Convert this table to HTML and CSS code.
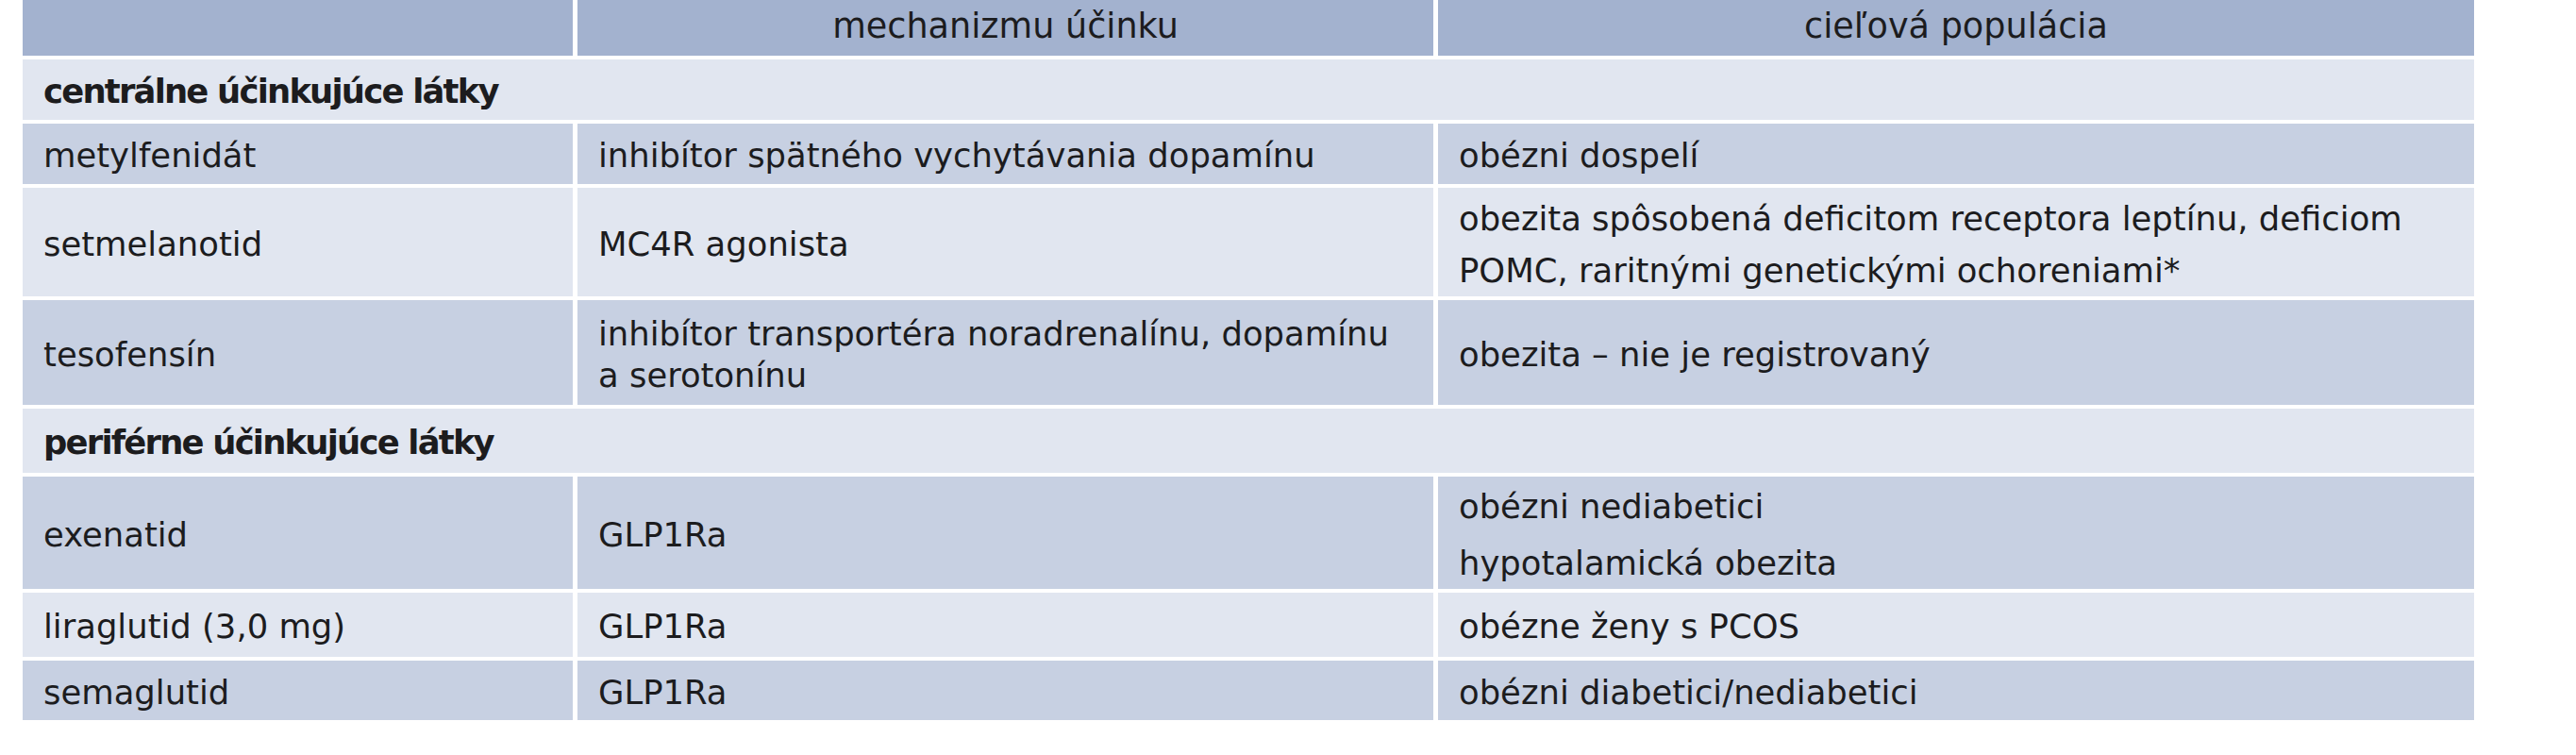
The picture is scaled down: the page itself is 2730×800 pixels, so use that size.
FILE: index.html
```html
<!DOCTYPE html>
<html lang="sk">
<head>
<meta charset="utf-8">
<title>Tabuľka – lieky</title>
<link rel="stylesheet" href="styles.css">
</head>
<body>
<div class="table" role="table">
  <div class="cell head"></div>
  <div class="cell head">mechanizmu účinku</div>
  <div class="cell head">cieľová populácia</div>

  <div class="cell cat light">centrálne účinkujúce látky</div>

  <div class="cell dark">metylfenidát</div>
  <div class="cell dark">inhibítor spätného vychytávania dopamínu</div>
  <div class="cell dark">obézni dospelí</div>

  <div class="cell light">setmelanotid</div>
  <div class="cell light">MC4R agonista</div>
  <div class="cell light"><span class="wide">obezita spôsobená deficitom receptora leptínu, deficiom POMC, raritnými genetickými ochoreniami*</span></div>

  <div class="cell dark">tesofensín</div>
  <div class="cell dark"><span class="tall">inhibítor transportéra noradrenalínu, dopamínu a&nbsp;serotonínu</span></div>
  <div class="cell dark">obezita – nie je registrovaný</div>

  <div class="cell cat light">periférne účinkujúce látky</div>

  <div class="cell dark">exenatid</div>
  <div class="cell dark">GLP1Ra</div>
  <div class="cell dark stack"><p>obézni nediabetici</p><p>hypotalamická obezita</p></div>

  <div class="cell light">liraglutid (3,0 mg)</div>
  <div class="cell light">GLP1Ra</div>
  <div class="cell light">obézne ženy s PCOS</div>

  <div class="cell dark">semaglutid</div>
  <div class="cell dark">GLP1Ra</div>
  <div class="cell dark">obézni diabetici/nediabetici</div>
</div>
</body>
</html>
```
FILE: styles.css
```css
html, body {
  margin: 0;
  padding: 0;
  background: #ffffff;
}

body {
  font-family: "DejaVu Sans", "Noto Sans", sans-serif;
  font-size: 35.4px;
  color: #1c1c1e;
}

.table {
  display: grid;
  grid-template-columns: 583px 907px 1098px;
  grid-template-rows: 59px 64px 64px 115px 111px 68px 119px 68px 63px;
  column-gap: 5px;
  row-gap: 4px;
  margin-left: 24px;
  width: 2598px;
}

.cell {
  display: flex;
  flex-direction: column;
  justify-content: center;
  padding: 4px 18px 0 22px;
  line-height: 36px;
  box-sizing: border-box;
}

.head {
  background: #a3b2cf;
  align-items: center;
  padding: 0 0 4px 0;
  font-size: 36.6px;
}

.light {
  background: #e1e6f0;
}

.dark {
  background: #c7d0e2;
}

.cat {
  grid-column: 1 / -1;
  font-weight: bold;
  letter-spacing: -1.8px;
}

.wide {
  line-height: 55px;
}

.tall {
  line-height: 44px;
}

.stack p {
  margin: 0;
  line-height: 35px;
}

.stack p + p {
  margin-top: 25px;
}
```
